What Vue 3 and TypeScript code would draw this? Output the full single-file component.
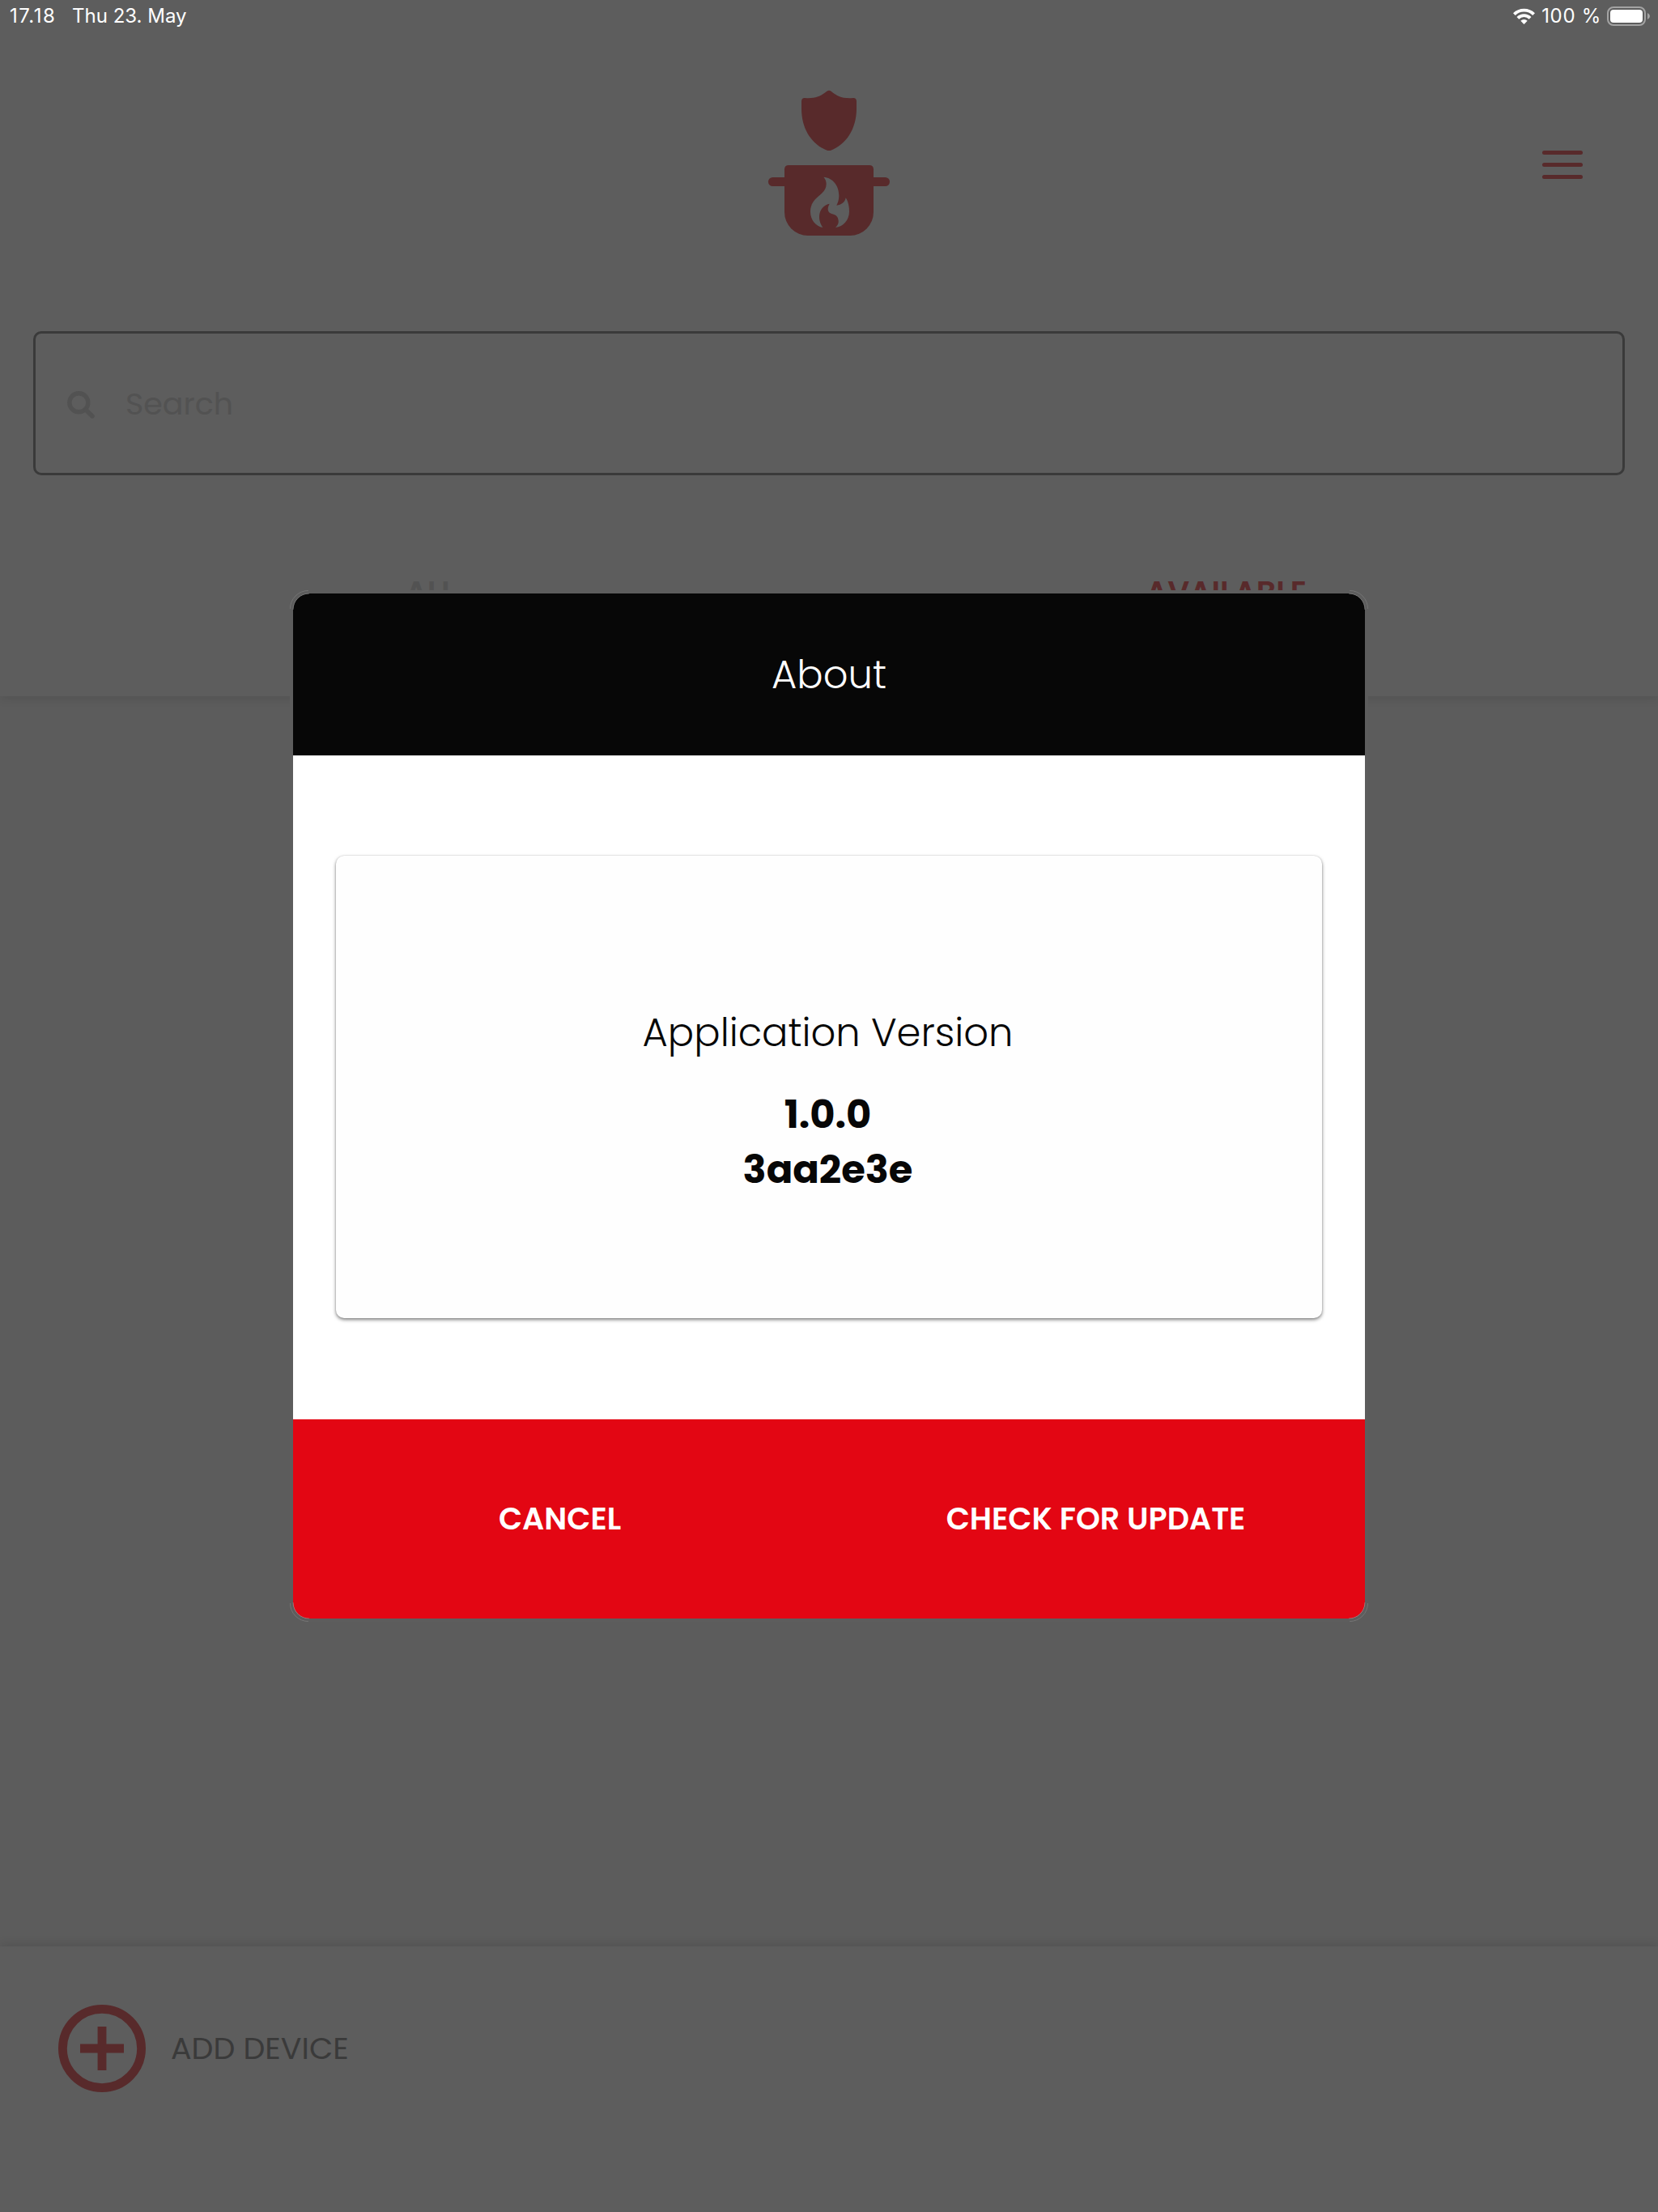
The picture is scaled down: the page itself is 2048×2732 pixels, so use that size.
<script setup lang="ts">
import { ref } from 'vue'

const query = ref('')
const tabs = [
  { id: 'all', label: 'ALL', active: false },
  { id: 'available', label: 'AVAILABLE', active: true },
]
const version = { number: '1.0.0', build: '3aa2e3e' }
</script>

<template>
  <div class="screen">
    <div class="statusbar">
      <span class="time">17.18</span>
      <span class="date">Thu 23. May</span>
      <svg class="wifi" viewBox="0 0 27 20" width="27" height="20">
        <path d="M13.5 20 L9.3 15.8 A6 6 0 0 1 17.7 15.8 Z" fill="#fff" />
        <path d="M5.9 12.3 A10.8 10.8 0 0 1 21.1 12.3" fill="none" stroke="#fff" stroke-width="3.9" />
        <path d="M1.4 7.6 A17.2 17.2 0 0 1 25.6 7.6" fill="none" stroke="#fff" stroke-width="3.9" />
      </svg>
      <span class="percent">100 %</span>
      <svg class="battery" viewBox="0 0 54 24" width="54" height="24">
        <rect x="1" y="1" width="46" height="22" rx="7" fill="none" stroke="#a3a3a3" stroke-width="2" />
        <rect x="4" y="4" width="40" height="16" rx="4" fill="#fff" />
        <path d="M50 8 Q53 9.5 53 12 Q53 14.5 50 16 Z" fill="#a3a3a3" />
      </svg>
    </div>

    <header class="top">
      <div class="brand">
        <svg class="logo" viewBox="0 0 570 600" width="190" height="200">
          <path
            fill="#582a2b"
            d="M274 38 Q282 33 290 38 C312 56 330 66 372 63 Q384 63 384 76 V102 C384 180 344 236 289 257 Q282 259 275 257 C220 236 180 180 180 102 V76 Q180 63 192 63 C234 66 252 56 274 38 Z"
          />
          <rect x="57" y="357" width="450" height="33" rx="16.5" fill="#582a2b" />
          <path fill="#582a2b" d="M133 312 H431 Q447 312 447 328 V486 A87 87 0 0 1 360 573 H204 A87 87 0 0 1 117 486 V328 Q117 312 133 312 Z" />
          <path
            fill="#5d5d5d"
            d="M262 356 C296 358 319 388 319 425 C319 440 315 450 310 461 C328 459 341 450 344 433 C352 444 357 462 357 484 C357 515 336 540 306 543 C314 534 318 528 317 518 C316 484 278 502 278 474 C278 467 281 461 284 455 C263 459 246 478 246 504 C246 522 253 533 259 543 C233 538 213 514 213 485 C213 426 272 426 272 382 C272 371 268 363 262 356 Z"
          />
        </svg>
        <button class="menu" aria-label="Menu"><i></i><i></i><i></i></button>
      </div>

      <label class="search">
        <svg viewBox="0 0 34 34" width="34" height="34" fill="none" stroke="#525252" stroke-width="5.4" stroke-linecap="round">
          <circle cx="14.3" cy="14.3" r="11.5" />
          <path d="M23.5 23.5 L31 31" />
        </svg>
        <input v-model="query" placeholder="Search" />
      </label>

      <nav class="tabs">
        <span v-for="tab in tabs" :key="tab.id" :class="{ active: tab.active }">{{ tab.label }}</span>
      </nav>
    </header>

    <section class="content"></section>

    <footer class="bottom">
      <svg viewBox="0 0 20 20" width="108" height="108" fill="none" stroke="#582a2b" stroke-width="2">
        <circle cx="10" cy="10" r="9" />
        <path d="M10 5 V15 M5 10 H15" />
      </svg>
      <span>ADD DEVICE</span>
    </footer>

    <div class="dialog" role="dialog">
      <div class="dialog-inner">
        <div class="dialog-title"><span>About</span></div>
        <div class="dialog-body">
          <div class="card">
            <p class="label">Application Version</p>
            <p class="value">{{ version.number }}</p>
            <p class="value">{{ version.build }}</p>
          </div>
        </div>
        <div class="dialog-actions">
          <button>CANCEL</button>
          <button>CHECK FOR UPDATE</button>
        </div>
      </div>
      <!-- thin highlights along the rounded corners -->
      <svg class="corners" viewBox="0 0 1332 1274" width="1332" height="1274" fill="none" stroke="#858585" stroke-width="0.6">
        <path d="M0.4 23 A22.6 22.6 0 0 1 23 0.4 M1309 0.4 A22.6 22.6 0 0 1 1331.6 23 M1331.6 1251 A22.6 22.6 0 0 1 1309 1273.6 M23 1273.6 A22.6 22.6 0 0 1 0.4 1251" />
        <path d="M4 24 A20 20 0 0 1 24 4 M1308 4 A20 20 0 0 1 1328 24 M1328 1250 A20 20 0 0 1 1308 1270 M24 1270 A20 20 0 0 1 4 1250" />
      </svg>
    </div>
  </div>
</template>

<style>
body {
  background: #5d5d5d;
}
</style>

<style scoped>
* {
  box-sizing: border-box;
}
.screen {
  position: relative;
  display: flex;
  flex-direction: column;
  width: 2048px;
  height: 2732px;
  overflow: hidden;
  background: #5c5c5c;
  font-family: Poppins, Inter, sans-serif;
}
button {
  border: 0;
  padding: 0;
  background: none;
  font: inherit;
  color: inherit;
}
p {
  margin: 0;
}

.statusbar {
  position: relative;
  z-index: 1;
  display: flex;
  align-items: center;
  height: 40px;
  padding: 0 9px 0 12px;
  background: #5d5d5d;
  color: #fff;
  font: 400 24px/40px Inter, sans-serif;
}
.time {
  width: 77px;
  letter-spacing: 1.5px;
}
.wifi {
  margin: 0 8px 0 auto;
}
.percent {
  letter-spacing: 0.7px;
  margin-right: 7px;
}

.top {
  position: relative;
  height: 820px;
  padding: 60px 41px 0;
  background: #5d5d5d;
  box-shadow: 0 2px 12px rgba(0, 0, 0, 0.12);
}
.brand {
  position: relative;
  display: flex;
  justify-content: center;
  height: 309px;
}
.logo {
  display: block;
  margin-left: 2px;
}
.menu {
  position: absolute;
  top: 86px;
  right: 52px;
  display: flex;
  flex-direction: column;
  gap: 10px;
  width: 50px;
}
.menu i {
  height: 5px;
  border-radius: 3px;
  background: #582a2b;
}
.search {
  display: flex;
  align-items: center;
  height: 178px;
  padding-left: 39px;
  border: 3px solid #3a3a3a;
  border-radius: 10px;
}
.search svg {
  flex: none;
  margin-top: 3px;
}
.search input {
  flex: 1;
  height: 60px;
  margin: 1px 0 0 38px;
  padding: 0;
  border: 0;
  outline: 0;
  background: none;
  font: inherit;
  font-size: 38px;
  color: #3a3a3a;
}
.search input::placeholder {
  color: #525252;
  opacity: 1;
}
.tabs {
  display: grid;
  grid-template-columns: 1fr 1fr;
  height: 273px;
  margin: 0 1px 0 -1px;
  padding-top: 115px;
  text-align: center;
  font-size: 38px;
  font-weight: 600;
  line-height: 60px;
  color: #525252;
}
.active {
  color: #582a2b;
}

.content {
  flex: 1;
}

.bottom {
  display: flex;
  align-items: center;
  gap: 31px;
  height: 328px;
  padding: 0 0 76px 72px;
  background: #5d5d5d;
  box-shadow: 0 -2px 12px rgba(0, 0, 0, 0.12);
  color: #3a3a3a;
  font-size: 38px;
}
.bottom span {
  padding-bottom: 2px;
}

.dialog {
  position: absolute;
  top: 729px;
  left: 358px;
  width: 1332px;
  height: 1274px;
  padding: 4px;
  border-radius: 24px;
  background: #5d5d5d;
}
.corners {
  position: absolute;
  inset: 0;
  pointer-events: none;
}
.dialog-inner {
  display: flex;
  flex-direction: column;
  height: 100%;
  overflow: hidden;
  border-radius: 20px;
  background: #fff;
}
.dialog-title {
  display: flex;
  align-items: center;
  justify-content: center;
  height: 200px;
  padding-top: 2px;
  background: #070707;
  color: #fff;
  font-size: 48px;
  font-weight: 300;
}
.dialog-body {
  flex: 1;
  padding: 124px 53px 125px;
}
.card {
  height: 100%;
  padding: 184px 3px 0 0;
  border-radius: 10px;
  background: #fefefe;
  box-shadow: 0 2px 4px rgba(0, 0, 0, 0.5), 0 0 2px rgba(0, 0, 0, 0.12);
  text-align: center;
  color: #070707;
}
.label {
  margin-bottom: 32px;
  font-size: 48px;
  font-weight: 300;
  line-height: 70px;
}
.value {
  font-size: 48px;
  font-weight: 700;
  line-height: 68px;
}
.dialog-actions {
  display: grid;
  grid-template-columns: 1fr 1fr;
  height: 246px;
  background: #e30613;
  color: #fff;
  font-size: 38px;
  font-weight: 600;
}
.dialog-actions button {
  padding: 0 3px 2px 0;
}
</style>
